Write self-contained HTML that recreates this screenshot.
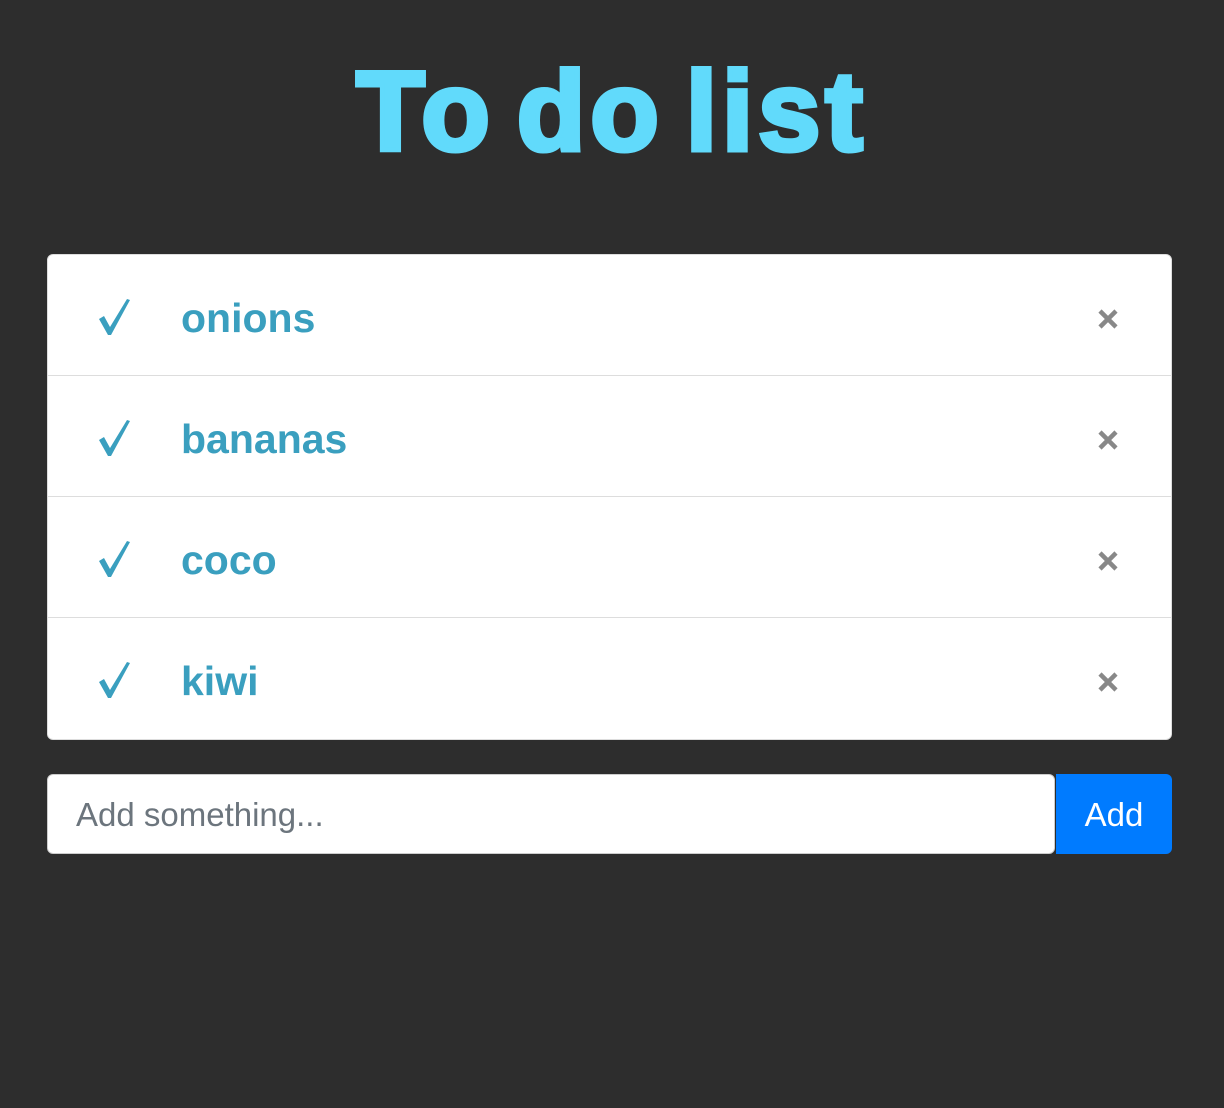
<!DOCTYPE html>
<html><head><style>
body{margin:0;background:#2d2d2d;width:1224px;height:1108px;font-family:"Liberation Sans",sans-serif;position:relative;overflow:hidden}
h1{position:absolute;top:47px;left:0;width:1224px;text-align:center;margin:0;font-size:112px;line-height:130px;color:#61dafb;font-weight:bold;letter-spacing:5px;word-spacing:-14px;-webkit-text-stroke:5px #61dafb}
.list{position:absolute;left:47px;top:254px;width:1123px;height:484px;background:#fff;border:1px solid #ddd;border-radius:6px}
.row{height:120px;border-bottom:1.5px solid #ddd;position:relative}
.row:last-child{border-bottom:none}
.ck{position:absolute;left:49px;top:42px}
.tx{position:absolute;left:133px;top:38px;font-size:41px;color:#3a9fbf;line-height:50px;font-weight:bold}
.x{position:absolute;left:1049px;top:53px}
.inp{position:absolute;left:47px;top:774px;width:1008px;height:80px;background:#fff;border:1px solid #ccc;border-radius:6px;font-size:33px;color:#6c757d;line-height:80px;padding-left:28px;box-sizing:border-box}
.btn{position:absolute;left:1056px;top:774px;width:116px;height:80px;background:#007bff;border-radius:0 6px 6px 0;color:#fff;font-size:33px;line-height:82px;text-align:center}
</style></head><body>
<h1>To do list</h1>
<div class="list">
<div class="row"><svg class="ck" width="34" height="40" viewBox="0 0 34 40"><path d="M2 22 L7 19 L13 30 L30 2 L33 3 L14 38 L11 38 Z" fill="#3a9fbf"/></svg><span class="tx">onions</span><svg class="x" width="22" height="22"><path d="M3 3L19 19M19 3L3 19" stroke="#888" stroke-width="4.5"/></svg></div>
<div class="row"><svg class="ck" width="34" height="40" viewBox="0 0 34 40"><path d="M2 22 L7 19 L13 30 L30 2 L33 3 L14 38 L11 38 Z" fill="#3a9fbf"/></svg><span class="tx">bananas</span><svg class="x" width="22" height="22"><path d="M3 3L19 19M19 3L3 19" stroke="#888" stroke-width="4.5"/></svg></div>
<div class="row"><svg class="ck" width="34" height="40" viewBox="0 0 34 40"><path d="M2 22 L7 19 L13 30 L30 2 L33 3 L14 38 L11 38 Z" fill="#3a9fbf"/></svg><span class="tx">coco</span><svg class="x" width="22" height="22"><path d="M3 3L19 19M19 3L3 19" stroke="#888" stroke-width="4.5"/></svg></div>
<div class="row"><svg class="ck" width="34" height="40" viewBox="0 0 34 40"><path d="M2 22 L7 19 L13 30 L30 2 L33 3 L14 38 L11 38 Z" fill="#3a9fbf"/></svg><span class="tx">kiwi</span><svg class="x" width="22" height="22"><path d="M3 3L19 19M19 3L3 19" stroke="#888" stroke-width="4.5"/></svg></div>
</div>
<div class="inp">Add something...</div>
<div class="btn">Add</div>
</body></html>
